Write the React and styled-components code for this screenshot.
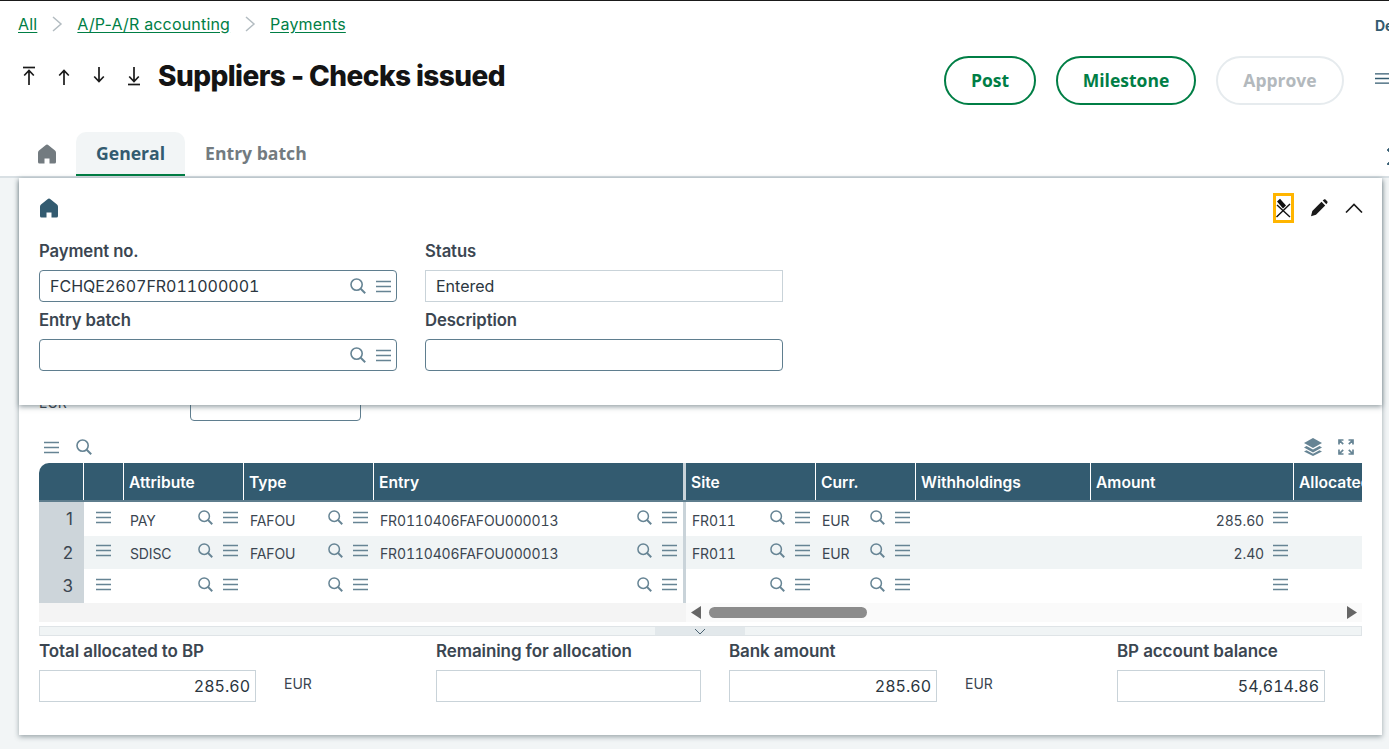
import React from "react";
import styled, { createGlobalStyle } from "styled-components";

const GlobalStyle = createGlobalStyle`
  html, body {
    margin: 0;
    padding: 0;
    height: 100%;
    overflow: hidden;
    background: #f2f5f6;
    font-family: "Inter", "Liberation Sans", sans-serif;
  }
  * { box-sizing: border-box; }
`;

const GREEN = "#007e45";
const SLATE = "#335b70";
const ICON = "#668494";

const Page = styled.div`
  width: 1389px;
  height: 749px;
  overflow: hidden;
  border-top: 1px solid #1a1a1a;
`;

const Header = styled.header`
  height: 177px;
  background: #fff;
  border-bottom: 2px solid #d9e0e4;
  display: flex;
  flex-direction: column;
`;

const CrumbRow = styled.div`
  height: 45px;
  padding: 0 0 0 18px;
  display: flex;
  align-items: center;
  position: relative;
`;

const Crumb = styled.a`
  color: ${GREEN};
  font-size: 16px;
  letter-spacing: 0.18px;
  text-decoration: underline;
  text-underline-offset: 2px;
`;

const CrumbSep = styled.span`
  width: 40px;
  display: flex;
  justify-content: center;
  color: #b3bcc1;
`;

const UserName = styled.span`
  margin-left: auto;
  width: 14px;
  overflow: hidden;
  padding-top: 3px;
  font-size: 14px;
  font-weight: 700;
  color: ${SLATE};
`;

const TitleRow = styled.div`
  height: 60px;
  display: flex;
  align-items: center;
  padding-left: 20px;
`;

const NavButtons = styled.div`
  display: flex;
  gap: 17px;
  width: 138px;
  color: #1a1a1a;
`;

const Title = styled.h1`
  margin: 0;
  font-size: 28px;
  font-weight: 800;
  color: #141414;
  letter-spacing: -0.57px;
`;

const ActionGroup = styled.div`
  margin-left: auto;
  display: flex;
  align-items: center;
  gap: 20px;
  padding-top: 8px;
`;

const PillButton = styled.button`
  height: 49px;
  width: ${(p) => p.$width}px;
  padding: 0;
  border-radius: 25px;
  background: #fff;
  font-family: "Open Sans", sans-serif;
  font-size: 17.5px;
  font-weight: 700;
  border: 2px solid ${(p) => (p.disabled ? "#e6ebee" : GREEN)};
  color: ${(p) => (p.disabled ? "#b3b9bd" : GREEN)};
`;

const HeaderMenu = styled.div`
  width: 14px;
  margin-left: 11px;
  margin-top: -3px;
  overflow: hidden;
  color: ${SLATE};
  display: flex;
`;

const TabRow = styled.nav`
  margin-top: auto;
  height: 44px;
  display: flex;
  align-items: stretch;
  padding-left: 38px;
  position: relative;
`;

const TabHome = styled.div`
  width: 38px;
  display: flex;
  align-items: center;
  color: #737b80;
`;

const Tab = styled.div`
  display: flex;
  align-items: center;
  justify-content: center;
  padding: 0 20px;
  font-family: "Open Sans", sans-serif;
  font-size: 17.6px;
  font-weight: 700;
  border-radius: 10px 10px 0 0;
  color: ${(p) => (p.$active ? SLATE : "#737b80")};
  background: ${(p) => (p.$active ? "#f2f5f6" : "transparent")};
  border-bottom: 2px solid ${(p) => (p.$active ? GREEN : "transparent")};
`;

const TabScroll = styled.div`
  position: absolute;
  right: 0;
  top: 16px;
  width: 2px;
  height: 17px;
  background: radial-gradient(circle at 2px 2px, #335b70 1.5px, transparent 2px) 0 0 / 2px 14px;
`;

const Card = styled.main`
  position: relative;
  margin: 0 7px 0 19px;
  height: 557px;
  background: #fff;
  box-shadow: 0 2px 5px rgba(50, 70, 80, 0.45);
  padding: 0 20px;
`;

const StickyPanel = styled.section`
  position: absolute;
  z-index: 2;
  left: 0;
  right: 0;
  top: 0;
  height: 227px;
  background: #fff;
  box-shadow: 0 2px 5px rgba(50, 70, 80, 0.5);
  padding: 0 20px;
`;

const PanelTop = styled.div`
  height: 60px;
  display: flex;
  align-items: center;
  color: ${SLATE};
  padding-left: 1px;
`;

const PanelActions = styled.div`
  margin-left: auto;
  display: flex;
  align-items: center;
  gap: 16px;
  color: #1a1a1a;
  margin-right: -1px;
`;

const FocusBox = styled.div`
  width: 21px;
  height: 30px;
  border: 3px solid #ffb500;
  display: flex;
  align-items: center;
  justify-content: center;
`;

const PanelAction = styled.div`
  width: 18px;
  margin-left: 1px;
  display: flex;
  justify-content: center;
`;

const PanelGrid = styled.div`
  display: grid;
  grid-template-columns: 358px 358px;
  column-gap: 28px;
`;

const Field = styled.div`
  display: flex;
  flex-direction: column;
  height: 69px;
`;

const Label = styled.label`
  height: 32px;
  padding-bottom: 6px;
  display: flex;
  align-items: center;
  font-size: 16.7px;
  font-weight: 600;
  letter-spacing: -0.1px;
  color: #3b4651;
`;

const InputBox = styled.div`
  height: 32px;
  width: ${(p) => (p.$width ? `${p.$width}px` : "100%")};
  display: flex;
  align-items: center;
  gap: 8px;
  padding: 0 ${(p) => (p.$right ? 5 : 10)}px;
  justify-content: ${(p) => (p.$right ? "flex-end" : "flex-start")};
  border: 1px solid ${(p) => (p.$readOnly ? "#c9d3d9" : "#5f7e8f")};
  border-radius: ${(p) => (p.$readOnly ? 0 : 4)}px;
  font-size: 16px;
  font-variant-numeric: tabular-nums;
  color: #2b3640;
  background: #fff;
`;

const InputValue = styled.span`
  flex: 1;
  text-align: ${(p) => (p.$right ? "right" : "left")};
`;

const InputIcons = styled.span`
  display: flex;
  align-items: center;
  gap: 10px;
  margin-right: -5px;
  color: ${ICON};
`;

const PeekRow = styled.div`
  height: 243px;
  display: flex;
  align-items: flex-end;
`;

const PeekUnit = styled.span`
  width: 151px;
  font-size: 14px;
  color: #3b4651;
  align-self: flex-end;
  padding-bottom: 10px;
`;

const PeekInput = styled.div`
  width: 171px;
  height: 32px;
  border: 1px solid #5f7e8f;
  border-radius: 4px;
`;

const GridTools = styled.div`
  height: 42px;
  display: flex;
  align-items: center;
  gap: 17px;
  padding: 10px 4px 0 5px;
  color: ${ICON};
`;

const GridToolsRight = styled.div`
  margin-left: auto;
  display: flex;
  align-items: center;
  gap: 15px;
  margin-right: 4px;
`;

const TableWrap = styled.div`
  overflow: hidden;
  border-top-left-radius: 10px;
`;

const cols = "45px 40px 120px 130px 312px 130px 100px 175px 203px 150px";

const HeadRow = styled.div`
  display: grid;
  grid-template-columns: ${cols};
  height: 39px;
  background: ${SLATE};
  border-bottom: 2px solid #5e7d8d;
`;

const HeadCell = styled.div`
  border-right: 1px solid ${(p) => (p.$thick ? "#c9d3d9" : "#fff")};
  border-right-width: ${(p) => (p.$thick ? 3 : 1)}px;
  display: flex;
  align-items: center;
  padding: 1px 0 0 5px;
  font-size: 15.6px;
  font-weight: 600;
  color: #fff;
  white-space: nowrap;
  overflow: hidden;
`;

const BodyRow = styled.div`
  display: grid;
  grid-template-columns: ${cols};
  height: ${(p) => p.$height}px;
  background: ${(p) => (p.$zebra ? "#f0f4f5" : "#fff")};
`;

const RowNum = styled.div`
  background: #cdd5da;
  display: flex;
  align-items: center;
  justify-content: flex-end;
  padding-right: 11px;
  font-size: 17px;
  color: #3b4651;
`;

const Cell = styled.div`
  display: flex;
  align-items: center;
  padding: 0 6px;
  font-size: 14px;
  font-variant-numeric: tabular-nums;
  color: #3b4651;
  letter-spacing: -0.15px;
  white-space: nowrap;
  ${(p) => p.$thick && "border-right: 3px solid #c9d3d9;"}
  ${(p) => p.$center && "justify-content: center; padding-right: 8px;"}
`;

const CellText = styled.span`
  flex: 1;
  text-align: ${(p) => (p.$right ? "right" : "left")};
  padding-right: ${(p) => (p.$right ? 9 : 0)}px;
  position: relative;
  top: 1px;
`;

const CellIcons = styled.span`
  display: flex;
  align-items: center;
  gap: 10px;
  color: ${ICON};
  position: relative;
  top: -2px;
`;

const ScrollRow = styled.div`
  height: 19px;
  display: flex;
`;

const ScrollFrozen = styled.div`
  width: 647px;
  background: #f4f4f4;
`;

const ScrollTrack = styled.div`
  flex: 1;
  background: #fafafa;
  display: flex;
  align-items: center;
  justify-content: space-between;
  padding: 0 5px;
  position: relative;
  color: #666;
`;

const ScrollThumb = styled.div`
  position: absolute;
  left: 23px;
  top: 4px;
  width: 158px;
  height: 11px;
  border-radius: 6px;
  background: #8c8c8c;
`;

const CollapseBar = styled.div`
  margin-top: 4px;
  height: 10px;
  padding-right: 2px;
  background: #f0f4f5;
  border: 1px solid #dfe4e7;
  display: flex;
  justify-content: center;
`;

const CollapseHandle = styled.div`
  width: 90px;
  background: #e2e8eb;
  display: flex;
  justify-content: center;
  align-items: center;
  color: #4a6272;
`;

const Totals = styled.div`
  display: grid;
  grid-template-columns: 397px 293px 388px 1fr;
`;

const TotalField = styled.div`
  display: flex;
  flex-direction: column;
`;

const TotalLabel = styled(Label)`
  height: 34px;
  padding: 0 0 4px;
  font-size: 17px;
`;

const TotalRow = styled.div`
  display: flex;
  align-items: center;
`;

const Unit = styled.span`
  font-size: 14px;
  color: #3b4651;
  margin-left: 28px;
  position: relative;
  top: -3px;
`;

const SearchIcon = ({ size = 16 }) => (
  <svg width={size} height={size} viewBox="0 0 16 16" fill="none" stroke="currentColor" strokeWidth="1.6">
    <circle cx="6.6" cy="6.6" r="5.6" />
    <path d="M10.7 10.7 15.2 15.2" strokeWidth="2" />
  </svg>
);

const MenuIcon = ({ size = 15 }) => (
  <svg width={size} height="13" viewBox="0 0 15 13" stroke="currentColor" strokeWidth="1.5" fill="none">
    <path d="M0 1.5h15M0 6.5h15M0 11.5h15" />
  </svg>
);

const HomeIcon = () => (
  <svg width="18" height="20" viewBox="0 0 18 20" fill="currentColor">
    <path d="M9 0.5 C9.500 0.500 10 0.800 10.500 1.200 L17 6.600 C17.700 7.200 18 7.900 18 8.800 V18 A1.500 1.500 0 0 1 16.500 19.500 H11.500 V14.500 H6.500 V19.500 H1.500 A1.500 1.500 0 0 1 0 18 V8.800 C0 7.900 0.300 7.200 1 6.600 L7.500 1.200 C8 0.800 8.500 0.500 9 0.500 Z" />
  </svg>
);

const ArrowIcon = ({ down, bar }) => (
  <svg width="18" height="20" viewBox="0 0 18 20" fill="none" stroke="currentColor" strokeWidth="1.7" style={{ transform: down ? "scaleY(-1)" : "none" }}>
    {bar && <path d="M3 1.500h12" />}
    <path d="M9 19V5M4.200 9.500 9 4.500l4.800 5" />
  </svg>
);

const Chevron = () => (
  <svg width="12" height="18" viewBox="0 0 12 18" fill="none" stroke="currentColor" strokeWidth="1.5">
    <path d="M2 2l8 7-8 7" />
  </svg>
);

const PencilPath = "M1 17.200 2.300 12 11.500 2.800l3.700 3.700L6 15.700Z M12.700 1.600 14 .6c.5-.4 1.200-.4 1.700.1l1.500 1.500c.5.5.5 1.200.1 1.700l-1 1.300Z";

const PencilIcon = () => (
  <svg width="18" height="18" viewBox="0 0 18 18" fill="currentColor">
    <path d={PencilPath} />
  </svg>
);

const PencilOffIcon = () => (
  <svg width="15" height="20" viewBox="0 0 15 20" fill="none">
    <path d="M1 3.500 4 .8l6 6.700-3 3Z" fill="#111" />
    <path d="M0.500 19 14 6M1 7l13 12" stroke="#111" strokeWidth="1.400" />
  </svg>
);

const CaretUp = () => (
  <svg width="18" height="10" viewBox="0 0 18 10" fill="none" stroke="currentColor" strokeWidth="1.600">
    <path d="M1 9.500 9 1.500l8 8" />
  </svg>
);

const LayersIcon = () => (
  <svg width="20" height="18" viewBox="0 0 20 18" fill="currentColor">
    <path d="M10 0 19 5 10 10 1 5Z" />
    <path d="M3.500 8 10 11.600 16.500 8 19 9.400 10 14.400 1 9.400Z" />
    <path d="M3.500 12.200 10 15.800 16.500 12.200 19 13.600 10 18 1 13.600Z" />
  </svg>
);

const ExpandIcon = () => (
  <svg width="16" height="16" viewBox="0 0 16 16" fill="none" stroke="currentColor" strokeWidth="1.700">
    <path d="M1 5.500V1h4.500M1.200 1.200l4 4M15 5.500V1h-4.500M14.800 1.200l-4 4M1 10.500V15h4.500M1.200 14.800l4-4M15 10.500V15h-4.500M14.800 14.800l-4-4" />
  </svg>
);

const rows = [
  { n: 1, attr: "PAY", type: "FAFOU", entry: "FR0110406FAFOU000013", site: "FR011", curr: "EUR", amount: "285.60", h: 34 },
  { n: 2, attr: "SDISC", type: "FAFOU", entry: "FR0110406FAFOU000013", site: "FR011", curr: "EUR", amount: "2.40", h: 33, zebra: true },
  { n: 3, attr: "", type: "", entry: "", site: "", curr: "", amount: "", h: 34 },
];

const heads = ["", "", "Attribute", "Type", "Entry", "Site", "Curr.", "Withholdings", "Amount", "Allocated"];

const LookupCell = ({ value, thick }) => (
  <Cell $thick={thick}>
    <CellText>{value}</CellText>
    <CellIcons>
      <SearchIcon size={15} />
      <MenuIcon />
    </CellIcons>
  </Cell>
);

const TotalBlock = ({ label, value, width, unit }) => (
  <TotalField>
    <TotalLabel>{label}</TotalLabel>
    <TotalRow>
      <InputBox $readOnly $right $width={width}>
        <InputValue $right>{value}</InputValue>
      </InputBox>
      {unit && <Unit>{unit}</Unit>}
    </TotalRow>
  </TotalField>
);

const App = () => (
  <Page>
    <GlobalStyle />
    <Header>
      <CrumbRow>
        <Crumb>All</Crumb>
        <CrumbSep><Chevron /></CrumbSep>
        <Crumb>A/P-A/R accounting</Crumb>
        <CrumbSep><Chevron /></CrumbSep>
        <Crumb>Payments</Crumb>
        <UserName>De</UserName>
      </CrumbRow>
      <TitleRow>
        <NavButtons>
          <ArrowIcon bar />
          <ArrowIcon />
          <ArrowIcon down />
          <ArrowIcon down bar />
        </NavButtons>
        <Title>Suppliers - Checks issued</Title>
        <ActionGroup>
          <PillButton $width={92}>Post</PillButton>
          <PillButton $width={140}>Milestone</PillButton>
          <PillButton $width={128} disabled>Approve</PillButton>
          <HeaderMenu><MenuIcon size={24} /></HeaderMenu>
        </ActionGroup>
      </TitleRow>
      <TabRow>
        <TabHome><HomeIcon /></TabHome>
        <Tab $active>General</Tab>
        <Tab>Entry batch</Tab>
        <TabScroll />
      </TabRow>
    </Header>

    <Card>
      <StickyPanel>
        <PanelTop>
          <HomeIcon />
          <PanelActions>
            <FocusBox><PencilOffIcon /></FocusBox>
            <PencilIcon />
            <PanelAction><CaretUp /></PanelAction>
          </PanelActions>
        </PanelTop>
        <PanelGrid>
          <Field>
            <Label>Payment no.</Label>
            <InputBox>
              <InputValue>FCHQE2607FR011000001</InputValue>
              <InputIcons><SearchIcon /><MenuIcon /></InputIcons>
            </InputBox>
          </Field>
          <Field>
            <Label>Status</Label>
            <InputBox $readOnly><InputValue>Entered</InputValue></InputBox>
          </Field>
          <Field>
            <Label>Entry batch</Label>
            <InputBox>
              <InputValue />
              <InputIcons><SearchIcon /><MenuIcon /></InputIcons>
            </InputBox>
          </Field>
          <Field>
            <Label>Description</Label>
            <InputBox />
          </Field>
        </PanelGrid>
      </StickyPanel>

      <PeekRow>
        <PeekUnit>EUR</PeekUnit>
        <PeekInput />
      </PeekRow>

      <GridTools>
        <MenuIcon />
        <SearchIcon />
        <GridToolsRight>
          <LayersIcon />
          <ExpandIcon />
        </GridToolsRight>
      </GridTools>

      <TableWrap>
        <HeadRow>
          {heads.map((h, i) => (
            <HeadCell key={i} $thick={i === 4}>{h}</HeadCell>
          ))}
        </HeadRow>
        {rows.map((r) => (
          <BodyRow key={r.n} $height={r.h} $zebra={r.zebra}>
            <RowNum>{r.n}</RowNum>
            <Cell $center><CellIcons><MenuIcon /></CellIcons></Cell>
            <LookupCell value={r.attr} />
            <LookupCell value={r.type} />
            <LookupCell value={r.entry} thick />
            <LookupCell value={r.site} />
            <LookupCell value={r.curr} />
            <Cell />
            <Cell>
              <CellText $right>{r.amount}</CellText>
              <CellIcons><MenuIcon /></CellIcons>
            </Cell>
            <Cell />
          </BodyRow>
        ))}
        <ScrollRow>
          <ScrollFrozen />
          <ScrollTrack>
            <svg width="10" height="13" viewBox="0 0 10 13" fill="currentColor"><path d="M10 0v13L0 6.500Z" /></svg>
            <ScrollThumb />
            <svg width="10" height="13" viewBox="0 0 10 13" fill="currentColor"><path d="M0 0v13l10-6.500Z" /></svg>
          </ScrollTrack>
        </ScrollRow>
      </TableWrap>

      <CollapseBar>
        <CollapseHandle>
          <svg width="12" height="7" viewBox="0 0 12 7" fill="none" stroke="currentColor" strokeWidth="1"><path d="M1 1l5 5 5-5" /></svg>
        </CollapseHandle>
      </CollapseBar>

      <Totals>
        <TotalBlock label="Total allocated to BP" value="285.60" width={217} unit="EUR" />
        <TotalBlock label="Remaining for allocation" value="" width={265} />
        <TotalBlock label="Bank amount" value="285.60" width={208} unit="EUR" />
        <TotalBlock label="BP account balance" value="54,614.86" width={208} />
      </Totals>
    </Card>
  </Page>
);

export default App;
